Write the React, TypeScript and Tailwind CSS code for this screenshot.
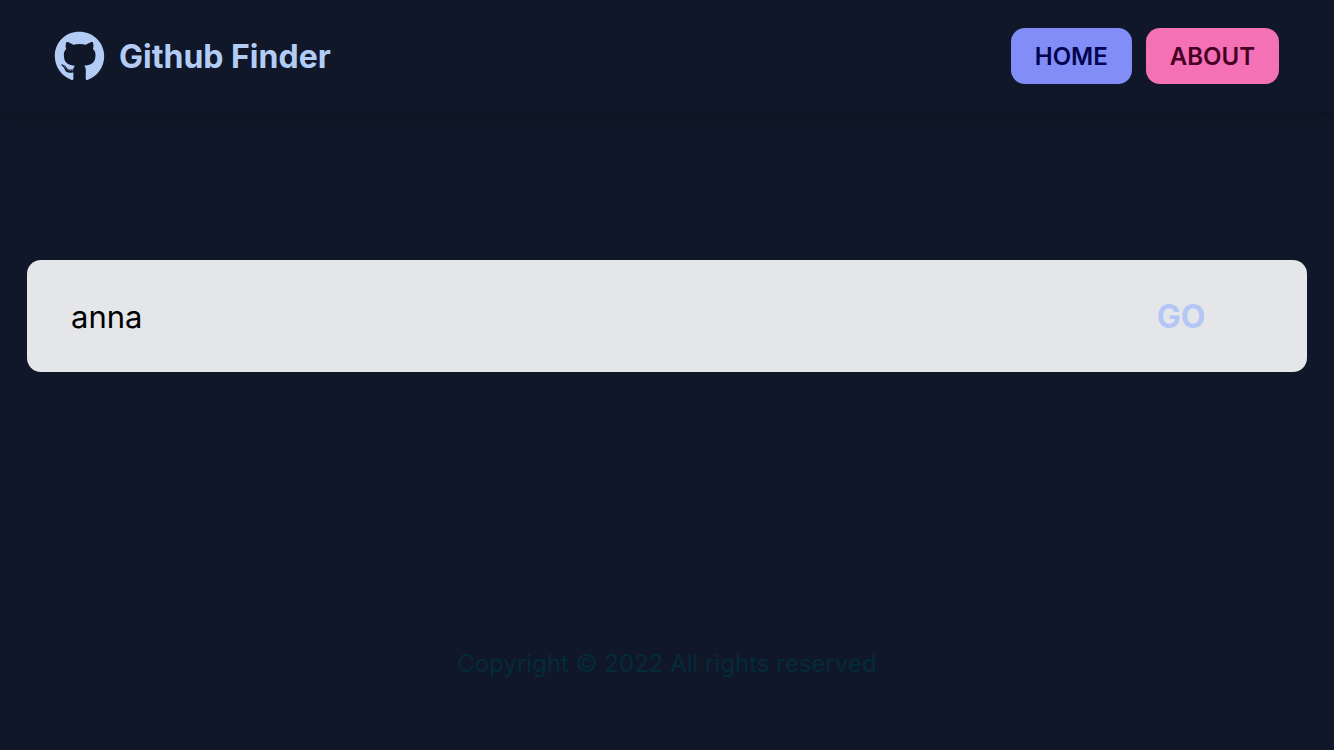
import { useState } from "react";
import { FaGithub } from "react-icons/fa";

function Navbar() {
  return (
    <nav className="flex h-28 items-center justify-between bg-[#101728] pr-[55px] pl-[54px] shadow-lg shadow-black/10">
      <a href="#home" className="flex items-center gap-[14px] text-[#b3ccf6]">
        <FaGithub className="size-[51px]" aria-hidden="true" />
        <span className="pt-0.5 text-[32px] leading-10 font-bold">Github Finder</span>
      </a>
      <div className="flex gap-[14px]">
        <a href="#home" className="flex h-14 items-center rounded-[14px] bg-[#828df8] px-6 pt-0.5 text-2xl font-semibold text-[#03044f]">
          HOME
        </a>
        <a href="#about" className="flex h-14 items-center rounded-[14px] bg-[#f471b5] px-6 pt-0.5 text-2xl font-semibold text-[#470024]">
          ABOUT
        </a>
      </div>
    </nav>
  );
}

function UserSearch() {
  const [query, setQuery] = useState("anna");
  return (
    <form
      onSubmit={(event) => event.preventDefault()}
      className="flex h-28 overflow-hidden rounded-[14px] bg-[#e5e6ea]"
    >
      <input
        type="text"
        aria-label="Search users"
        value={query}
        onChange={(event) => setQuery(event.target.value)}
        className="min-w-0 flex-1 bg-transparent px-11 pt-0.5 text-[31px] text-black outline-none"
      />
      <button type="submit" className="w-[252px] pt-0.5 text-[32px] font-bold text-[#b4c6f4]">
        GO
      </button>
    </form>
  );
}

export default function App() {
  return (
    <div className="flex min-h-screen flex-col bg-[#101728] font-['Inter',sans-serif]">
      <Navbar />
      <main className="flex-1 px-[27px] pt-[148px]">
        <UserSearch />
      </main>
      <footer className="pb-[68px] text-center text-2xl leading-9 text-[#032b3b]">
        <p>Copyright © 2022 All rights reserved</p>
      </footer>
    </div>
  );
}
